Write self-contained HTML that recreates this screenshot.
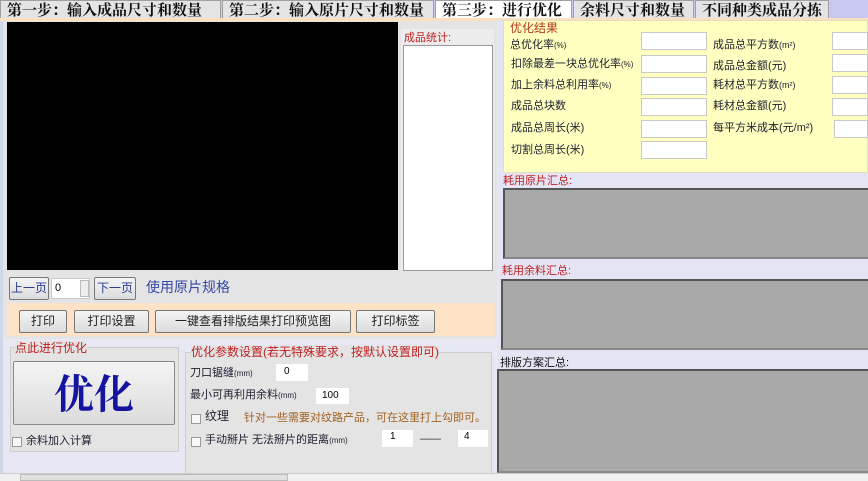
<!DOCTYPE html>
<html><head><meta charset="utf-8"><style>
*{margin:0;padding:0;box-sizing:border-box}
body{width:868px;height:481px;overflow:hidden;background:#e8e8f4;font-family:"Liberation Sans","Noto Sans CJK SC",sans-serif;font-size:11px;position:relative}
.a{position:absolute}
.tab{position:absolute;top:0;height:18px;background:#e4e4e4;border:1px solid #a0a0a0;border-bottom:none;font-family:"Noto Serif CJK SC","Noto Sans CJK SC",serif;font-weight:bold;font-size:15px;line-height:17px;padding-left:6px;color:#111;white-space:nowrap;overflow:hidden}
.in{position:absolute;background:#fff;border:1px solid #c8c8c8}
.btn{position:absolute;background:linear-gradient(#f4f4f4,#dcdcdc);border:1px solid #777;border-radius:2px;text-align:center;font-size:12px;color:#222;white-space:nowrap}
.lbl{position:absolute;font-size:11px;color:#223;white-space:nowrap;line-height:14px}
.red{color:#c02020}
.gray{position:absolute;background:#a9a9a9;border:2px solid #555;border-right:none;border-bottom-color:#888}
.cb{position:absolute;width:10px;height:10px;border:1px solid #999;background:#f8f8f8}
.s{font-size:8px}
</style></head><body>
<div class="a" style="left:0;top:0;width:868px;height:18px;background:#c8c8f0"></div>
<div class="tab" style="left:0;width:221px">第一步：输入成品尺寸和数量</div>
<div class="tab" style="left:222px;width:212px">第二步：输入原片尺寸和数量</div>
<div class="tab" style="left:435px;width:137px;background:#fff;height:19px">第三步：进行优化</div>
<div class="tab" style="left:573px;width:121px">余料尺寸和数量</div>
<div class="tab" style="left:695px;width:134px">不同种类成品分拣</div>

<div class="a" style="left:0;top:18px;width:868px;height:3px;background:#fbe0c0"></div>
<div class="a" style="left:3px;top:21px;width:494px;height:318px;background:#e4e4e4"></div>
<div class="a" style="left:7px;top:22px;width:391px;height:248px;background:#000"></div>
<div class="a" style="left:401px;top:29px;width:93px;height:242px;background:#ececec"></div>
<div class="lbl red" style="left:404px;top:31px;font-size:11px">成品统计:</div>
<div class="in" style="left:403px;top:45px;width:90px;height:226px;border-color:#999"></div>

<div class="btn" style="left:9px;top:277px;width:40px;height:23px;line-height:21px;color:#2a3a90">上一页</div>
<div class="in" style="left:51px;top:278px;width:39px;height:21px;font-size:11px;padding-left:3px;line-height:19px">0</div>
<div class="a" style="left:80px;top:280px;width:9px;height:17px;border:1px solid #bbb;background:#eee"></div>
<div class="btn" style="left:94px;top:277px;width:42px;height:23px;line-height:21px;color:#2a3a90">下一页</div>
<div class="lbl" style="left:146px;top:279px;font-size:14px;line-height:16px;color:#3848a8">使用原片规格</div>

<div class="a" style="left:7px;top:303px;width:488px;height:33px;background:#fde2c6"></div>
<div class="btn" style="left:19px;top:310px;width:48px;height:23px;line-height:21px">打印</div>
<div class="btn" style="left:74px;top:310px;width:75px;height:23px;line-height:21px">打印设置</div>
<div class="btn" style="left:155px;top:310px;width:196px;height:23px;line-height:21px">一键查看排版结果打印预览图</div>
<div class="btn" style="left:356px;top:310px;width:79px;height:23px;line-height:21px">打印标签</div>

<div class="a" style="left:10px;top:347px;width:169px;height:105px;border:1px solid #ccc;background:#e4e4e4"></div>
<div class="lbl red" style="left:15px;top:341px;font-size:12px;background:#e4e4e4">点此进行优化</div>
<div class="btn" style="left:13px;top:361px;width:162px;height:64px;border-color:#888;line-height:60px;font-size:40px;font-weight:bold;color:#1414a0;font-family:'Noto Serif CJK SC','Noto Sans CJK SC',serif">优化</div>
<div class="cb" style="left:12px;top:437px"></div>
<div class="lbl" style="left:26px;top:434px">余料加入计算</div>

<div class="a" style="left:185px;top:352px;width:307px;height:122px;border:1px solid #ccc;background:#e4e4e4"></div>
<div class="lbl red" style="left:191px;top:345px;font-size:12px;background:#e4e4e4">优化参数设置(若无特殊要求，按默认设置即可)</div>
<div class="lbl" style="left:190px;top:366px">刀口锯缝<span class="s">(mm)</span></div>
<div class="in" style="left:276px;top:364px;width:32px;height:17px;font-size:10px;padding-left:8px;line-height:15px;border:none">0</div>
<div class="lbl" style="left:190px;top:388px">最小可再利用余料<span class="s">(mm)</span></div>
<div class="in" style="left:316px;top:388px;width:33px;height:16px;font-size:10px;padding-left:6px;line-height:15px;border:none">100</div>
<div class="cb" style="left:191px;top:414px"></div>
<div class="lbl" style="left:205px;top:409px;font-size:12px">纹理</div>
<div class="lbl" style="left:244px;top:411px;color:#a06020">针对一些需要对纹路产品，可在这里打上勾即可。</div>
<div class="cb" style="left:191px;top:437px"></div>
<div class="lbl" style="left:205px;top:433px">手动掰片 无法掰片的距离<span class="s">(mm)</span></div>
<div class="in" style="left:382px;top:430px;width:31px;height:17px;font-size:10px;padding-left:8px;line-height:13px;border:none">1</div>
<div class="lbl" style="left:420px;top:432px;color:#333;letter-spacing:-2px">— —</div>
<div class="in" style="left:458px;top:430px;width:30px;height:17px;font-size:10px;padding-left:6px;line-height:13px;border:none">4</div>

<div class="a" style="left:498px;top:20px;width:370px;height:453px;background:#e4e4f4"></div>
<div class="a" style="left:503px;top:20px;width:365px;height:153px;background:#ffffc0;border:1px solid #e0e0c0"></div>
<div class="lbl" style="left:510px;top:21px;font-size:12px;color:#b03820">优化结果</div>
<div class="lbl" style="left:510px;top:38px">总优化率<span class="s">(%)</span></div>
<div class="lbl" style="left:511px;top:57px">扣除最差一块总优化率<span class="s">(%)</span></div>
<div class="lbl" style="left:511px;top:78px">加上余料总利用率<span class="s">(%)</span></div>
<div class="lbl" style="left:511px;top:99px">成品总块数</div>
<div class="lbl" style="left:511px;top:121px">成品总周长(米)</div>
<div class="lbl" style="left:511px;top:143px">切割总周长(米)</div>
<div class="in" style="left:641px;top:32px;width:66px;height:18px"></div>
<div class="in" style="left:641px;top:55px;width:66px;height:18px"></div>
<div class="in" style="left:641px;top:77px;width:66px;height:18px"></div>
<div class="in" style="left:641px;top:98px;width:66px;height:18px"></div>
<div class="in" style="left:641px;top:120px;width:66px;height:18px"></div>
<div class="in" style="left:641px;top:141px;width:66px;height:18px"></div>
<div class="lbl" style="left:713px;top:38px">成品总平方数<span style="font-size:9px">(m²)</span></div>
<div class="lbl" style="left:713px;top:59px">成品总金额(元)</div>
<div class="lbl" style="left:713px;top:78px">耗材总平方数<span style="font-size:9px">(m²)</span></div>
<div class="lbl" style="left:713px;top:99px">耗材总金额(元)</div>
<div class="lbl" style="left:713px;top:121px">每平方米成本(元/m²)</div>
<div class="in" style="left:832px;top:32px;width:36px;height:18px"></div>
<div class="in" style="left:832px;top:54px;width:36px;height:18px"></div>
<div class="in" style="left:832px;top:76px;width:36px;height:18px"></div>
<div class="in" style="left:832px;top:98px;width:36px;height:18px"></div>
<div class="in" style="left:834px;top:120px;width:34px;height:18px"></div>

<div class="lbl red" style="left:503px;top:174px;font-size:11px">耗用原片汇总:</div>
<div class="gray" style="left:503px;top:188px;width:365px;height:71px"></div>
<div class="lbl red" style="left:502px;top:264px;font-size:11px">耗用余料汇总:</div>
<div class="gray" style="left:501px;top:279px;width:367px;height:71px"></div>
<div class="lbl" style="left:500px;top:356px;font-size:11px;color:#111">排版方案汇总:</div>
<div class="gray" style="left:497px;top:369px;width:371px;height:104px"></div>

<div class="a" style="left:0;top:473px;width:868px;height:8px;background:#f0f0f0;border-top:1px solid #ccc"></div>
<div class="a" style="left:20px;top:474px;width:268px;height:7px;background:#e0e0e0;border:1px solid #bbb"></div>
<div class="a" style="left:0;top:21px;width:3px;height:452px;background:#d0d8e8"></div>
</body></html>
